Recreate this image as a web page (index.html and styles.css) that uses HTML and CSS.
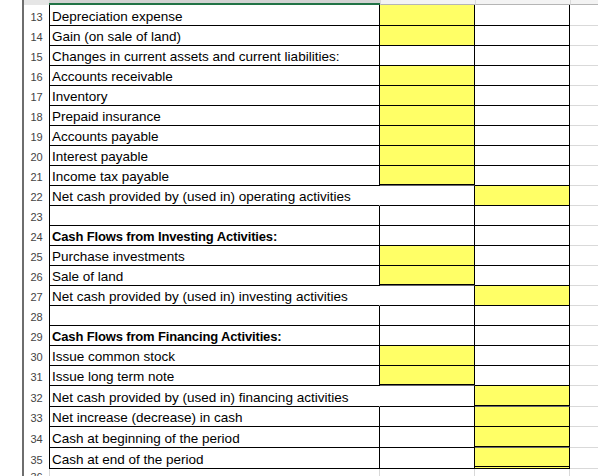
FILE: index.html
```html
<!DOCTYPE html>
<html>
<head>
<meta charset="utf-8">
<link rel="stylesheet" href="styles.css">
</head>
<body>
<div class="sheet">
  <div class="gutter"></div>
  <div class="divider"></div>
  <div class="grid">
    <div class="hdr">
      <div class="h h-rn"></div><div class="h h-b"></div><div class="h h-c"></div><div class="h h-d"></div><div class="h h-e"></div>
    </div>
    <div class="row first"><div class="rn">13</div><div class="cb">Depreciation expense</div><div class="cc y"></div><div class="cd"></div><div class="ce"></div></div>
    <div class="row"><div class="rn">14</div><div class="cb">Gain (on sale of land)</div><div class="cc y"></div><div class="cd"></div><div class="ce"></div></div>
    <div class="row"><div class="rn">15</div><div class="cb">Changes in current assets and current liabilities:</div><div class="cc"></div><div class="cd"></div><div class="ce"></div></div>
    <div class="row"><div class="rn">16</div><div class="cb">Accounts receivable</div><div class="cc y"></div><div class="cd"></div><div class="ce"></div></div>
    <div class="row"><div class="rn">17</div><div class="cb">Inventory</div><div class="cc y"></div><div class="cd"></div><div class="ce"></div></div>
    <div class="row"><div class="rn">18</div><div class="cb">Prepaid insurance</div><div class="cc y"></div><div class="cd"></div><div class="ce"></div></div>
    <div class="row"><div class="rn">19</div><div class="cb">Accounts payable</div><div class="cc y"></div><div class="cd"></div><div class="ce"></div></div>
    <div class="row"><div class="rn">20</div><div class="cb">Interest payable</div><div class="cc y"></div><div class="cd"></div><div class="ce"></div></div>
    <div class="row"><div class="rn">21</div><div class="cb">Income tax payable</div><div class="cc y thick"></div><div class="cd"></div><div class="ce"></div></div>
    <div class="row"><div class="rn">22</div><div class="cb open">Net cash provided by (used in) operating activities</div><div class="cc"></div><div class="cd y"></div><div class="ce"></div></div>
    <div class="row"><div class="rn">23</div><div class="cb"></div><div class="cc"></div><div class="cd"></div><div class="ce"></div></div>
    <div class="row"><div class="rn">24</div><div class="cb bold">Cash Flows from Investing Activities:</div><div class="cc"></div><div class="cd"></div><div class="ce"></div></div>
    <div class="row"><div class="rn">25</div><div class="cb">Purchase investments</div><div class="cc y"></div><div class="cd"></div><div class="ce"></div></div>
    <div class="row"><div class="rn">26</div><div class="cb">Sale of land</div><div class="cc y thick"></div><div class="cd"></div><div class="ce"></div></div>
    <div class="row"><div class="rn">27</div><div class="cb open">Net cash provided by (used in) investing activities</div><div class="cc"></div><div class="cd y"></div><div class="ce"></div></div>
    <div class="row"><div class="rn">28</div><div class="cb"></div><div class="cc"></div><div class="cd"></div><div class="ce"></div></div>
    <div class="row"><div class="rn">29</div><div class="cb bold">Cash Flows from Financing Activities:</div><div class="cc"></div><div class="cd"></div><div class="ce"></div></div>
    <div class="row"><div class="rn">30</div><div class="cb">Issue common stock</div><div class="cc y"></div><div class="cd"></div><div class="ce"></div></div>
    <div class="row"><div class="rn">31</div><div class="cb">Issue long term note</div><div class="cc y thick"></div><div class="cd"></div><div class="ce"></div></div>
    <div class="row tall"><div class="rn">32</div><div class="cb open">Net cash provided by (used in) financing activities</div><div class="cc"></div><div class="cd y thick"></div><div class="ce"></div></div>
    <div class="row"><div class="rn">33</div><div class="cb">Net increase (decrease) in cash</div><div class="cc"></div><div class="cd y"></div><div class="ce"></div></div>
    <div class="row tall"><div class="rn">34</div><div class="cb">Cash at beginning of the period</div><div class="cc"></div><div class="cd y thick"></div><div class="ce"></div></div>
    <div class="row tall"><div class="rn">35</div><div class="cb">Cash at end of the period</div><div class="cc"></div><div class="cd y dbl"></div><div class="ce"></div></div>
    <div class="row blank"><div class="rn">36</div><div class="cb"></div><div class="cc"></div><div class="cd"></div><div class="ce"></div></div>
  </div>
</div>
</body>
</html>
```

FILE: styles.css
```css
html, body {
  margin: 0;
  padding: 0;
  background: #ffffff;
  overflow: hidden;
}
.sheet {
  display: flex;
  width: 598px;
  height: 476px;
  overflow: hidden;
  font-family: "Liberation Sans", Arial, sans-serif;
}
.gutter {
  width: 22px;
  flex: none;
  background: #ffffff;
}
.divider {
  width: 2px;
  flex: none;
  background: #6e6e6e;
}
.grid {
  flex: 1;
  display: flex;
  flex-direction: column;
}
.hdr, .row {
  display: grid;
  grid-template-columns: 25px 331px 95px 95px 1fr;
  flex: none;
}
.hdr {
  height: 5px;
}
.h {
  box-sizing: border-box;
  height: 5px;
}
.h-rn {
  background: #e6e6e6;
}
.h-b {
  background: #d2d2d2;
  border-bottom: 2px solid #217346;
}
.h-c, .h-d, .h-e {
  background: #f3f3f3;
  border-bottom: 1px solid #b5b5b5;
  border-left: 1px solid #dadada;
}
.row {
  height: 20px;
}
.row.first {
  height: 21px;
}
.row.tall {
  height: 21px;
}
.row > div {
  box-sizing: border-box;
  height: 100%;
}
.rn {
  display: flex;
  align-items: flex-end;
  justify-content: center;
  font-size: 11px;
  line-height: 14px;
  padding-bottom: 2px;
  color: #444444;
  background: #ffffff;
}
.cb {
  display: flex;
  align-items: flex-end;
  padding-left: 2px;
  font-size: 13.5px;
  line-height: 16px;
  color: #000000;
  white-space: nowrap;
  border-left: 1px solid #000000;
  border-right: 1px solid #000000;
  border-bottom: 1px solid #000000;
}
.cb.open {
  border-right-color: #ffffff;
}
.cb.bold {
  font-weight: bold;
  font-size: 13px;
  letter-spacing: -0.15px;
}
.cc, .cd {
  border-right: 1px solid #000000;
  border-bottom: 1px solid #000000;
  background: #ffffff;
}
.y {
  background: #ffff66;
}
.thick {
  border-bottom: 1px solid #6a6a6a;
  box-shadow: inset 0 -1px 0 #000000;
}
.dbl {
  border-bottom: 3px double #000000;
}
.ce {
  border-bottom: 1px solid #d9d9d9;
}
.blank .cb {
  border-left-color: #d9d9d9;
  border-right-color: #d9d9d9;
  border-bottom-color: #d9d9d9;
}
.blank .cc, .blank .cd {
  border-right-color: #d9d9d9;
  border-bottom-color: #d9d9d9;
}
.blank .rn {
  align-items: flex-start;
  padding-top: 1px;
}
```
